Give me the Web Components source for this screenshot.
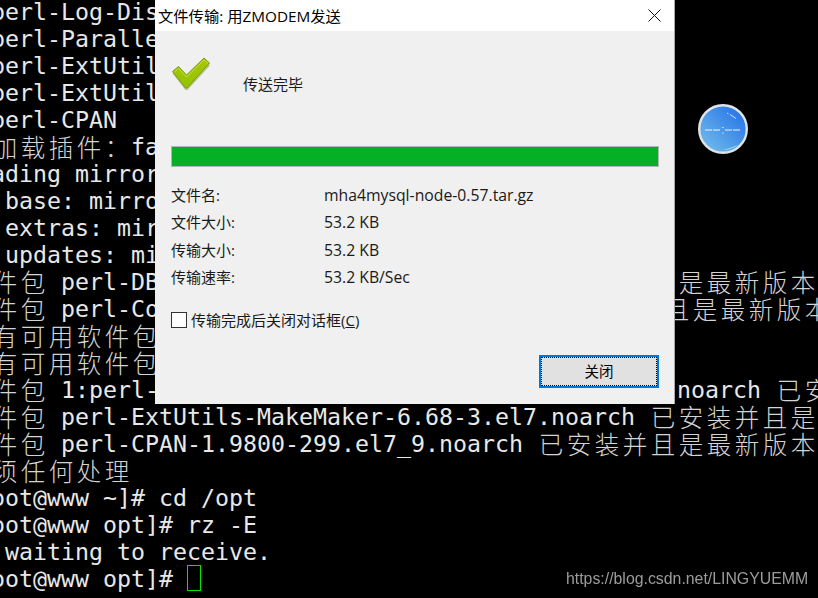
<!DOCTYPE html>
<html><head><meta charset="utf-8"><style>html,body{margin:0;background:#000;overflow:hidden}</style></head><body>
<term-desktop>
<term-screen>
<term-line>  perl-Log-Dis</term-line>
<term-line>  perl-Paralle</term-line>
<term-line>  perl-ExtUtil</term-line>
<term-line>  perl-ExtUtil</term-line>
<term-line>  perl-CPAN</term-line>
<term-line><c-j>已加载插件：</c-j>fa</term-line>
<term-line>Loading mirror</term-line>
<term-line> * base: mirro</term-line>
<term-line> * extras: mir</term-line>
<term-line> * updates: mi</term-line>
<term-line><c-j>软件包</c-j> perl-DB<c-gap style="--n:37"></c-gap><c-j>是最新版本</c-j></term-line>
<term-line><c-j>软件包</c-j> perl-Co<c-gap style="--n:36"></c-gap><c-j>且是最新版本</c-j></term-line>
<term-line><c-j>没有可用软件包</c-j></term-line>
<term-line><c-j>没有可用软件包</c-j></term-line>
<term-line><c-j>软件包</c-j> 1:perl-<c-gap style="--n:37"></c-gap>noarch <c-j>已安</c-j></term-line>
<term-line><c-j>软件包</c-j> perl-ExtUtils-MakeMaker-6.68-3.el7.noarch <c-j>已安装并且是</c-j></term-line>
<term-line><c-j>软件包</c-j> perl-CPAN-1.9800-299.el7_9.noarch <c-j>已安装并且是最新版本</c-j></term-line>
<term-line><c-j>无须任何处理</c-j></term-line>
<term-line>[root@www ~]# cd /opt</term-line>
<term-line>[root@www opt]# rz -E</term-line>
<term-line>rz waiting to receive.</term-line>
<term-line>[root@www opt]# <term-cursor></term-cursor></term-line>
</term-screen>
<transfer-dialog title-text="文件传输: 用ZMODEM发送" status="传送完毕">
<info-row label="文件名:">mha4mysql-node-0.57.tar.gz</info-row>
<info-row label="文件大小:" style="--h:28px">53.2 KB</info-row>
<info-row label="传输大小:">53.2 KB</info-row>
<info-row label="传输速率:">53.2 KB/Sec</info-row>
</transfer-dialog>
<clock-badge></clock-badge>
<csdn-mark>https://blog.csdn.net/LINGYUEMM</csdn-mark>
</term-desktop>
<script>
function def(name, css, html){
  customElements.define(name, class extends HTMLElement{
    constructor(){super();const r=this.attachShadow({mode:'open'});
      r.innerHTML='<style>'+css+'</style>'+(typeof html==='function'?html(this):html);}
  });
}
const UI='"Open Sans","Noto Sans CJK SC",sans-serif';
def('term-desktop',':host{display:block;position:relative;width:818px;height:598px;overflow:hidden;background:#000}','<slot></slot>');
def('term-screen',':host{display:block;margin-left:-37px;font:23.25px/27px "DejaVu Sans Mono",monospace;color:#e8e8e8}div{margin-top:-2px}','<div><slot></slot></div>');
def('term-line',':host{display:block;height:27px;white-space:pre;font-kerning:none}','<slot></slot>');
def('c-j',':host{display:inline-block;font:300 24.5px/27px "Noto Sans CJK SC",sans-serif;letter-spacing:3.5px;color:#d4d4d4;vertical-align:top;transform:translateX(1.75px)}','<slot></slot>');
def('c-gap',':host{display:inline-block;width:calc(var(--n)*14px)}','');
def('term-cursor',':host{display:inline-block;box-sizing:border-box;width:14px;height:26px;border:1px solid #00e600;vertical-align:top}','');
def('transfer-dialog',`:host{position:absolute;left:155px;top:0;width:520px;height:404px;box-sizing:border-box;background:#f0f0f0;color:#1a1a1a;border-right:1px solid #a8a8a8;display:flex;flex-direction:column;font:15px/20px ${UI}}
.t{height:31px;background:#fff;display:flex;align-items:center;justify-content:space-between;padding-left:3px;font-size:15.3px;color:#000}
.x{width:40px;display:flex;justify-content:center}
.b{flex:1;padding:0 15px 0 16px;display:flex;flex-direction:column}
.s{display:flex;height:84px;align-items:flex-start}
.s svg{margin-top:26px;flex:none}
.s span{margin:43px 0 0 32px}
.p{box-sizing:border-box;height:21px;margin-top:31px;border:1px solid #b4b4b4;background:#06b025;width:488px}
.r{margin-top:14px;display:flex;flex-direction:column}
.c{display:flex;align-items:center;gap:4px;margin-top:20px;height:20px}
.c i{box-sizing:border-box;width:16px;height:16px;border:1px solid #333;background:#fff}
.c u{text-decoration-thickness:1px}
.f{display:flex;justify-content:flex-end;margin-top:25px}
.btn{box-sizing:border-box;width:120px;height:33px;border:2px solid #0078d7;background:#e1e1e1;display:flex;padding:1px}
.btn span{flex:1;display:flex;align-items:center;justify-content:center;outline:1px dotted #000;color:#000;font-size:14.5px}`,
h=>`<div class="t"><span>${h.getAttribute('title-text')}</span><span class="x"><svg width="13" height="13" viewBox="0 0 13 13"><path d="M.5.5l12 12M12.5.5l-12 12" stroke="#111" stroke-width="1" fill="none"/></svg></span></div>
<div class="b"><div class="s"><svg width="40" height="37" viewBox="0 0 40 37"><defs><linearGradient id="g" x1="0" y1="0" x2="0" y2="1"><stop offset="0" stop-color="#a9c600"/><stop offset="1" stop-color="#92c400"/></linearGradient></defs>
<path d="M1.5 14.5L7.5 9.5 15.5 18 32.5 1 39 6.5 16.5 31 14.5 31z" fill="#6d8a1a" opacity=".45" transform="translate(0 2)"/>
<path d="M1.5 14.5L7.5 9.5 15.5 18 33 1 38.5 6 16 31 14.5 31z" fill="url(#g)" stroke="#7d9b14" stroke-width="1" stroke-linejoin="round"/>
<path d="M3.5 15L7.5 11.5 15.5 20 33 3 37 6.5" fill="none" stroke="#c4dc4a" stroke-width="1"/></svg><span>${h.getAttribute('status')}</span></div>
<div class="p"></div><div class="r"><slot></slot></div>
<div class="c"><i></i><span>传输完成后关闭对话框(<u>C</u>)</span></div>
<div class="f"><div class="btn"><span>关闭</span></div></div></div>`);
def('info-row',`:host{display:flex;height:var(--h,27px);align-items:center;font:15.75px/20px ${UI}}span{width:153px;flex:none;font-size:15px}`,h=>`<span>${h.getAttribute('label')}</span><slot></slot>`);
def('clock-badge',`:host{position:absolute;left:698px;top:104px;width:50px;height:50px}`,`<svg width="50" height="50" viewBox="0 0 50 50"><defs><linearGradient id="b" x1=".15" y1=".85" x2=".8" y2=".2"><stop offset="0" stop-color="#6bb6ea"/><stop offset="1" stop-color="#2f7ce8"/></linearGradient></defs>
<circle cx="25" cy="25" r="23.8" fill="url(#b)" stroke="#dfe3e6" stroke-width="2.4"/>
<path d="M25 46C31 46 36 44.5 40 41L33 43.5z" fill="#8fd8e0"/>
<path d="M29 9l1.500 1M32 10.500l6 4" stroke="#cfe0f8" stroke-width="1" fill="none"/>
<path d="M7 26h7M15 26h7M27 26h7M35 26h7" stroke="#f2f6fb" stroke-width="1.2"/>
<path d="M25 23v1M25 28.500v1" stroke="#f2f6fb" stroke-width="1.2"/></svg>`);
def('csdn-mark',':host{position:absolute;left:566px;top:570px;font:15.85px/18px "Liberation Sans",sans-serif;color:#9c9c9c;white-space:nowrap;filter:blur(.3px)}','<slot></slot>');
</script>
</body></html>
